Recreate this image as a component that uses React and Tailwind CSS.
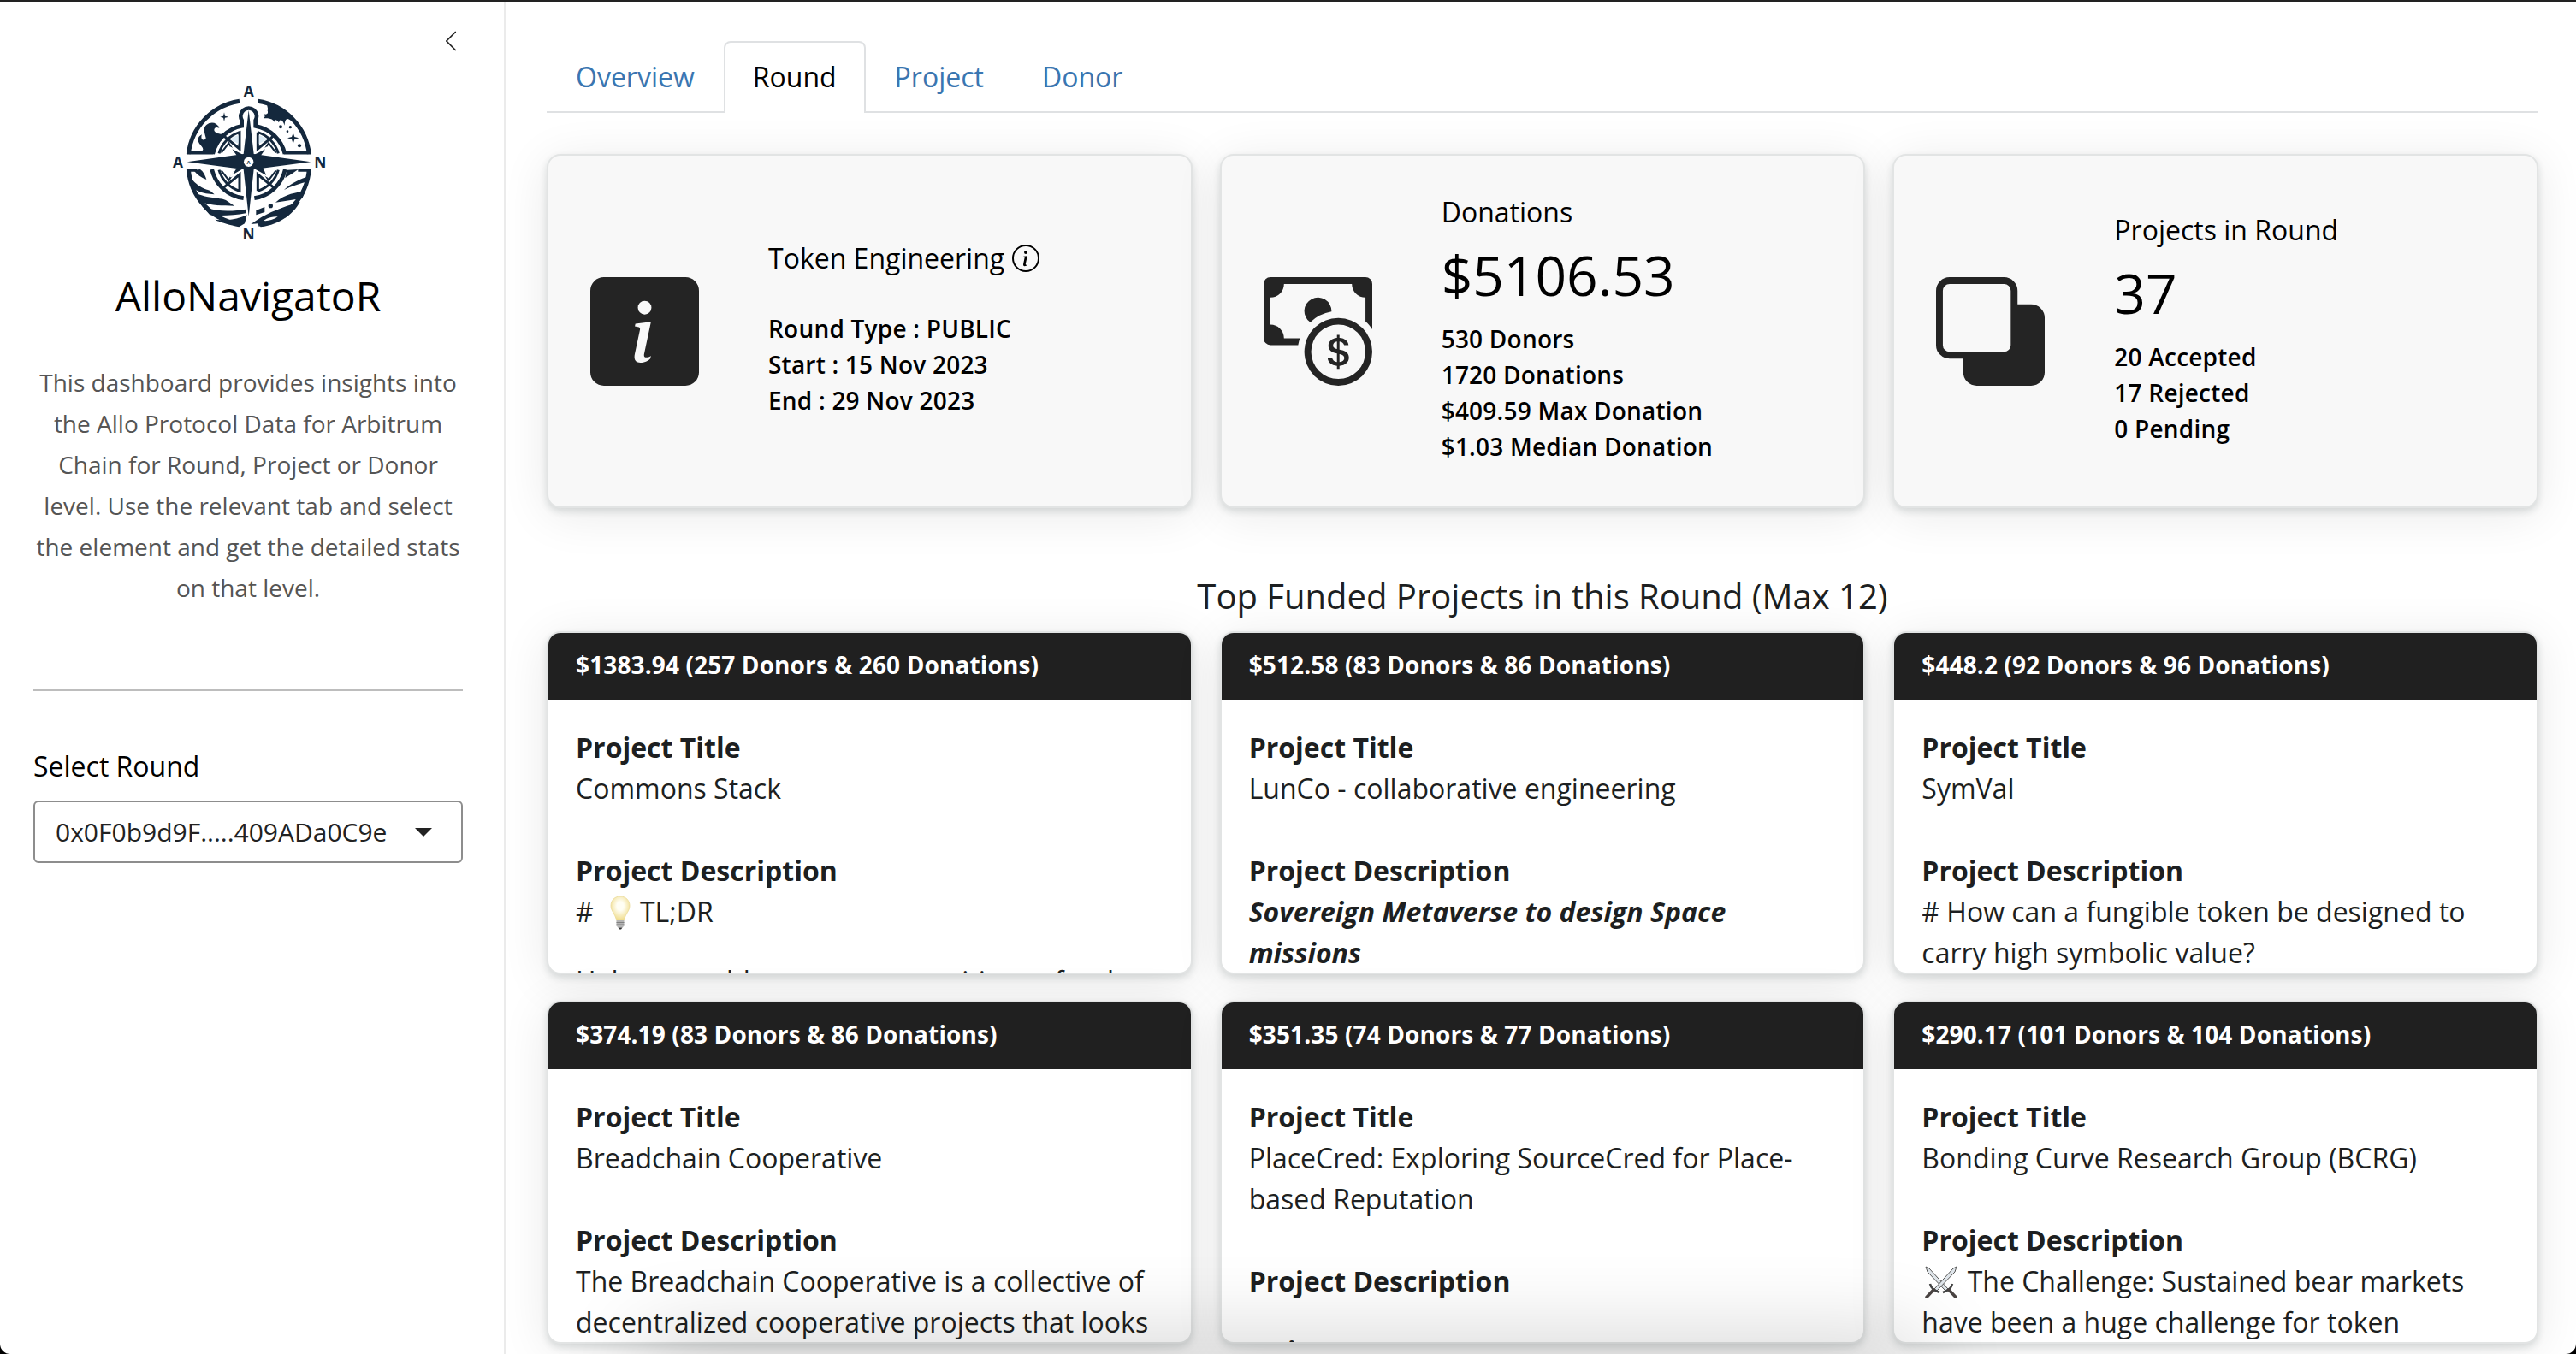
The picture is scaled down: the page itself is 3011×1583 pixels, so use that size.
import React from "react";
import { BsCashCoin, BsInfoCircle, BsInfoSquareFill, BsSubtract, BsChevronLeft } from "react-icons/bs";

const NAVY = "#14283d";

function Logo() {
  return (
    <svg viewBox="0 0 660 660" className="h-[220px] w-[220px]" fill="none" stroke={NAVY}>
      {/* outer ring */}
      <g strokeWidth="15">
        <path d="M121 300 A212 212 0 0 1 300 115" />
        <path d="M364 115 A212 212 0 0 1 544 300" />
        <path d="M121 352 A212 212 0 0 0 300 547" />
        <path d="M366 547 A212 212 0 0 0 544 352" />
        <path d="M114 296 H208 M456 296 H552 M114 357 H150 M505 357 H552" strokeWidth="11" />
      </g>
      {/* compass housing */}
      <g strokeWidth="14">
        <path d="M206 300 A130 130 0 0 1 308 202 V182 A28 28 0 1 1 356 182 V202 A130 130 0 0 1 459 300" />
        <path d="M203 354 A130 130 0 0 0 314 455" />
        <path d="M352 455 A130 130 0 0 0 460 354" />
      </g>
      <g strokeWidth="9">
        <path d="M228 298 A108 108 0 0 1 300 224 V282 L244 236 M364 224 A108 108 0 0 1 436 298 M364 224 V282 L420 236" />
        <path d="M228 356 A108 108 0 0 0 300 430 V372 L244 418 M364 430 A108 108 0 0 0 436 356 M364 430 V372 L420 418" />
        <path d="M236 296 L262 262 L284 298 M428 296 L402 262 L380 298 M236 358 L262 392 L284 358 M428 358 L402 392 L380 358" strokeWidth="6" />
      </g>
      <path d="M286 238 L296 234 V264 L266 248 Z M378 238 L368 234 V264 L398 248 Z" fill="#dcebf5" stroke="none" />
      {/* rose */}
      <g fill={NAVY} stroke="#fff" strokeWidth="5">
        <path d="M266 276 L316 302 L332 262 L348 302 L398 276 L372 314 L398 380 L348 352 L332 392 L316 352 L268 380 L292 342 L292 312 Z" />
      </g>
      <path d="M332 146 L350 300 L550 328 L350 354 L332 520 L314 354 L116 328 L314 300 Z" fill={NAVY} stroke="none" />
      <circle cx="332" cy="328" r="17" fill="#fff" stroke="none" />
      {/* clouds, stars */}
      <g fill={NAVY} stroke="none">
        <path d="M160 292 C184 286 166 274 158 262 C150 246 158 236 168 232 C160 252 180 256 182 244 C176 222 172 208 184 198 C200 184 224 190 229 210 C218 202 208 210 212 220 C220 230 234 232 244 228 C226 246 208 270 204 294 Z" />
        <path d="M384 160 C396 164 402 158 398 148 C402 140 394 132 398 124 C404 130 416 138 432 134 C456 148 480 172 490 192 C474 176 460 166 458 200 C450 178 442 176 438 190 C430 180 424 176 422 188 C412 170 394 178 384 174 C392 170 388 166 384 160 Z" />
        <path d="M488 226 L493 240 L508 244 L493 249 L488 264 L483 249 L468 244 L483 240 Z" />
        <path d="M246 154 L249 167 L262 170 L249 173 L246 186 L243 173 L232 170 L243 167 Z" />
        <circle cx="444" cy="205" r="6" /><circle cx="478" cy="206" r="5" /><circle cx="468" cy="221" r="4" />
        <circle cx="510" cy="271" r="6" /><circle cx="409" cy="482" r="8" />
      </g>
      {/* waves */}
      <g fill={NAVY} stroke="none">
        <path d="M138 356 C150 372 168 384 184 390 C180 376 172 360 162 354 Z" />
        <path d="M120 372 C150 416 180 424 196 428 L212 442 C170 440 140 428 128 412 Z" />
        <path d="M142 436 C190 458 230 452 252 462 L282 482 C230 482 190 480 160 466 Z" />
        <path d="M168 482 C220 506 280 500 322 494 V508 C280 516 230 518 196 514 Z" />
        <path d="M214 530 C250 536 290 530 326 514 L318 544 L298 556 C260 548 230 540 214 530 Z" />
        <path d="M466 356 L506 354 C490 366 474 376 460 384 Z" />
        <path d="M456 426 C480 404 510 388 546 378 L542 396 C512 404 480 414 456 426 Z" />
        <path d="M426 470 C460 440 500 434 530 432 L520 456 C490 460 460 466 426 470 Z" />
        <path d="M358 498 L388 486 V504 L358 514 Z" />
        <path d="M340 546 C380 516 430 492 512 468 C490 510 440 548 374 556 L364 544 Z" />
      </g>
      <path d="M384 534 C400 522 420 518 434 520 C420 530 400 536 384 534 Z" fill="#fff" stroke="none" />
      <g fill={NAVY} stroke="none" fontFamily="Open Sans, sans-serif" fontWeight="700" textAnchor="middle">
        <text x="332" y="99" fontSize="52">A</text>
        <text x="84" y="348" fontSize="52">A</text>
        <text x="583" y="347" fontSize="52">N</text>
        <text x="332" y="599" fontSize="52">N</text>
        <text x="332" y="335" fontSize="18">A</text>
      </g>
    </svg>
  );
}

function Bulb() {
  return (
    <svg viewBox="0 0 24 40" className="ml-[11px] mr-[11px] inline-block h-10 w-6 align-[-9px]">
      <defs>
        <radialGradient id="glass" cx="0.5" cy="0.4" r="0.6">
          <stop offset="0.3" stopColor="#fffef4" />
          <stop offset="1" stopColor="#f0dc8a" />
        </radialGradient>
      </defs>
      <path d="M12 1C5.500 1 1 5.500 1 12c0 6 5 9 6.500 17h9C18 21 23 18 23 12 23 5.500 18.500 1 12 1z" fill="url(#glass)" stroke="#eadb9a" strokeWidth="0.800" />
      <path d="M7.500 29h9v6.500l-2 2h-5l-2-2z" fill="#b4b4b4" />
      <path d="M7.500 31.500h9M7.500 34h9" stroke="#808080" />
      <path d="M9.500 37.500h5l-1.500 2h-2z" fill="#333" />
    </svg>
  );
}

function Swords() {
  return (
    <svg viewBox="0 0 38 38" className="ml-1 mr-[3px] inline-block h-[38px] w-[38px] align-[-8px]" fill="none">
      <path d="M1 1l4 2 22 24-3 2L3 7z" fill="#dfe5ea" stroke="#555" strokeWidth="1" />
      <path d="M37 1l-4 2-22 24 3 2L35 7z" fill="#dfe5ea" stroke="#555" strokeWidth="1" />
      <path d="M6 21c1 5 5 8 11 10M32 21c-1 5-5 8-11 10" stroke="#444" strokeWidth="2.500" />
      <path d="M10 28l-8 8.500M28 28l8 8.500" stroke="#4a4443" strokeWidth="3.500" strokeLinecap="round" />
    </svg>
  );
}

const CARD_SHADOW = "shadow-[0_4px_8px_rgba(20,40,40,0.14),0_8px_56px_rgba(0,0,0,0.09)]";

function Stat({ icon, title, value, lines }) {
  return (
    <div className={`flex h-[414px] items-center rounded-[16px] border-2 border-[#e2e4e4] bg-[#f8f8f8] pl-[49px] text-black ${CARD_SHADOW}`}>
      <div className="mt-px h-[127px] w-[127px] shrink-0 text-[#242424]">{icon}</div>
      <div className="ml-[81px] pb-[2px]">
        <div className="flex items-center whitespace-nowrap text-[32px] leading-[38px]">{title}</div>
        {value ? <div className="mb-[15px] mt-4 text-[64px] leading-[77px]">{value}</div> : <div className="h-[42px]" />}
        {lines.map((l) => (
          <div key={l} className="whitespace-nowrap text-[28px] font-semibold leading-[42px] tracking-[0.22px]">{l}</div>
        ))}
      </div>
    </div>
  );
}

function Project({ amount, title, children }) {
  return (
    <div className={`h-[401px] overflow-hidden rounded-[16px] border-2 border-[#e2e4e4] bg-white text-[#1d1f21] ${CARD_SHADOW}`}>
      <div className="h-[78px] bg-[#202020] px-8 pt-4 text-[28px] font-bold leading-[42px] tracking-[0.12px] text-white">{amount}</div>
      <div className="pl-8 pr-[30px] pt-8 text-[32px] leading-[48px]">
        <div className="font-bold">Project Title</div>
        <div className="mb-12">{title}</div>
        <div className="font-bold">Project Description</div>
        {children}
      </div>
    </div>
  );
}

export default function App() {
  return (
    <div className="h-[1583px] w-[3011px] overflow-hidden bg-black font-['Open_Sans',sans-serif]">
      <div className="relative flex h-full overflow-hidden rounded-b-[12px] border-t-2 border-[#222] bg-white">
        <aside className="flex h-full w-[591px] shrink-0 flex-col border-r-2 border-[#ebebeb] pl-[39px] pr-[48px]">
          <BsChevronLeft className="mt-[32px] ml-[474px] h-[28px] w-[28px] text-[#222]" />
          <div className="mt-[18px] flex justify-center"><Logo /></div>
          <h1 className="mt-[12px] text-center text-[48px] leading-[68px] text-black">AlloNavigatoR</h1>
          <p className="mt-[43px] text-center text-[28px] leading-[48px] text-[#555]">
            This dashboard provides insights into<br />the Allo Protocol Data for Arbitrum<br />Chain for Round, Project or Donor<br />
            level. Use the relevant tab and select<br />the element and get the detailed stats<br />on that level.
          </p>
          <div className="mt-[95px] h-[2px] bg-[#bdbdbd]" />
          <label className="mt-[64px] text-[32px] leading-[48px] text-black">Select Round</label>
          <div className="mt-[16px] flex h-[73px] items-center justify-between rounded-[6px] border-2 border-[#8d8d8d] pl-[24px] pr-[34px] text-[30px] text-[#222]">
            <span>0x0F0b9d9F.....409ADa0C9e</span>
            <svg viewBox="0 0 20 10" className="h-[10px] w-5"><path d="M0 0h20L10 10z" fill="#222" /></svg>
          </div>
        </aside>
        <main className="flex-1 pl-[48px] pr-[44px] pt-[46px]">
          <nav className="flex h-[84px] border-b-2 border-[#dfe1e3] text-[32px] leading-[48px] text-[#3a76b1]">
            <span className="px-[34px] pt-[18px]">Overview</span>
            <span className="h-[84px] rounded-t-[8px] border-2 border-b-0 border-[#dfe1e3] bg-white px-8 pt-4 text-black">Round</span>
            <span className="px-[34px] pt-[18px]">Project</span>
            <span className="px-[34px] pt-[18px]">Donor</span>
          </nav>
          <div className="mt-12 grid grid-cols-3 gap-8">
            <Stat
              icon={<BsInfoSquareFill className="h-full w-full" />}
              title={<>Token Engineering<BsInfoCircle className="ml-[9px] h-8 w-8" /></>}
              lines={["Round Type : PUBLIC", "Start : 15 Nov 2023", "End : 29 Nov 2023"]}
            />
            <Stat
              icon={<BsCashCoin className="h-full w-full" />}
              title="Donations"
              value="$5106.53"
              lines={["530 Donors", "1720 Donations", "$409.59 Max Donation", "$1.03 Median Donation"]}
            />
            <Stat
              icon={<BsSubtract className="h-full w-full" />}
              title="Projects in Round"
              value="37"
              lines={["20 Accepted", "17 Rejected", "0 Pending"]}
            />
          </div>
          <h2 className="mt-[79px] text-center text-[40px] leading-[48px] text-[#1d1f21]">Top Funded Projects in this Round (Max 12)</h2>
          <div className="mt-[17px] grid grid-cols-3 gap-x-8 gap-y-[31px]">
            <Project amount="$1383.94 (257 Donors & 260 Donations)" title="Commons Stack">
              <div># <Bulb />TL;DR</div>
              <div className="mt-[33px] whitespace-nowrap">Help us enable more communities to fund</div>
            </Project>
            <Project amount="$512.58 (83 Donors & 86 Donations)" title="LunCo - collaborative engineering">
              <div className="font-bold italic">Sovereign Metaverse to design Space missions</div>
            </Project>
            <Project amount="$448.2 (92 Donors & 96 Donations)" title="SymVal">
              <div># How can a fungible token be designed to carry high symbolic value?</div>
            </Project>
            <Project amount="$374.19 (83 Donors & 86 Donations)" title="Breadchain Cooperative">
              <div>The Breadchain Cooperative is a collective of decentralized cooperative projects that looks</div>
            </Project>
            <Project amount="$351.35 (74 Donors & 77 Donations)" title="PlaceCred: Exploring SourceCred for Place-based Reputation">
              <div className="mt-[34px] font-bold">Unique</div>
            </Project>
            <Project amount="$290.17 (101 Donors & 104 Donations)" title="Bonding Curve Research Group (BCRG)">
              <div className="whitespace-nowrap"><Swords /> The Challenge: Sustained bear markets<br />have been a huge challenge for token</div>
            </Project>
          </div>
        </main>
        <div className="pointer-events-none absolute -bottom-[40px] left-[760px] h-[40px] w-[1480px] rounded-[40px] shadow-[0_0_100px_16px_rgba(0,0,0,0.2)]" />
      </div>
    </div>
  );
}
